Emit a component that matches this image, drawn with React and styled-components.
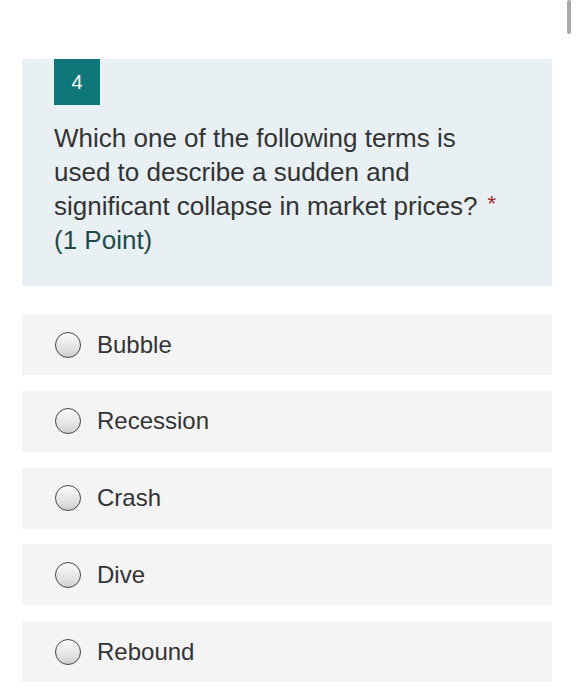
import React from 'react';
import styled, { createGlobalStyle } from 'styled-components';

const GlobalStyle = createGlobalStyle`
  html, body {
    margin: 0;
    padding: 0;
    background: #ffffff;
    font-family: "Liberation Sans", Arial, sans-serif;
  }
`;

const Page = styled.div`
  position: relative;
  width: 576px;
  height: 700px;
  padding: 59px 24px 0 22px;
  box-sizing: border-box;
  overflow: hidden;
`;

const ScrollThumb = styled.div`
  position: absolute;
  top: 0;
  right: 5px;
  width: 4px;
  height: 34px;
  border-radius: 2px;
  background: #a8a8a8;
`;

const QuestionCard = styled.div`
  background: #e8f0f4;
  padding: 0 32px 29px;
  margin-bottom: 28px;
`;

const Badge = styled.div`
  width: 46px;
  height: 46px;
  background: #0f7779;
  color: #ffffff;
  font-size: 20px;
  display: flex;
  align-items: center;
  justify-content: center;
  margin-bottom: 16px;
`;

const Title = styled.div`
  max-width: 452px;
  font-size: 26px;
  line-height: 34px;
  color: #333333;
`;

const Required = styled.span`
  position: relative;
  top: -4px;
  color: #a4262c;
  font-size: 22px;
  line-height: 0;
  margin-left: 10px;
  white-space: nowrap;
`;

const Points = styled.div`
  color: #1d4b4a;
`;

const Options = styled.div`
  display: flex;
  flex-direction: column;
  gap: 15.75px;
`;

const Option = styled.label`
  display: flex;
  align-items: center;
  height: 61px;
  background: #f4f4f4;
  padding-left: 33px;
  font-size: 24px;
  color: #333333;
`;

const Radio = styled.span`
  width: 24px;
  height: 24px;
  border-radius: 50%;
  border: 1.5px solid #444444;
  background: linear-gradient(180deg, #fbfbfb 0%, #e4e4e4 60%, #cfcfcf 100%);
  margin-right: 16px;
  flex: none;
`;

const choices = ['Bubble', 'Recession', 'Crash', 'Dive', 'Rebound'];

export default function App() {
  return (
    <Page>
      <GlobalStyle />
      <ScrollThumb />
      <QuestionCard>
        <Badge>4</Badge>
        <Title>
          Which one of the following terms is used to describe a sudden and significant collapse in market prices?
          <Required>*</Required>
          <Points>(1 Point)</Points>
        </Title>
      </QuestionCard>
      <Options>
        {choices.map((c) => (
          <Option key={c}>
            <Radio />
            {c}
          </Option>
        ))}
      </Options>
    </Page>
  );
}
